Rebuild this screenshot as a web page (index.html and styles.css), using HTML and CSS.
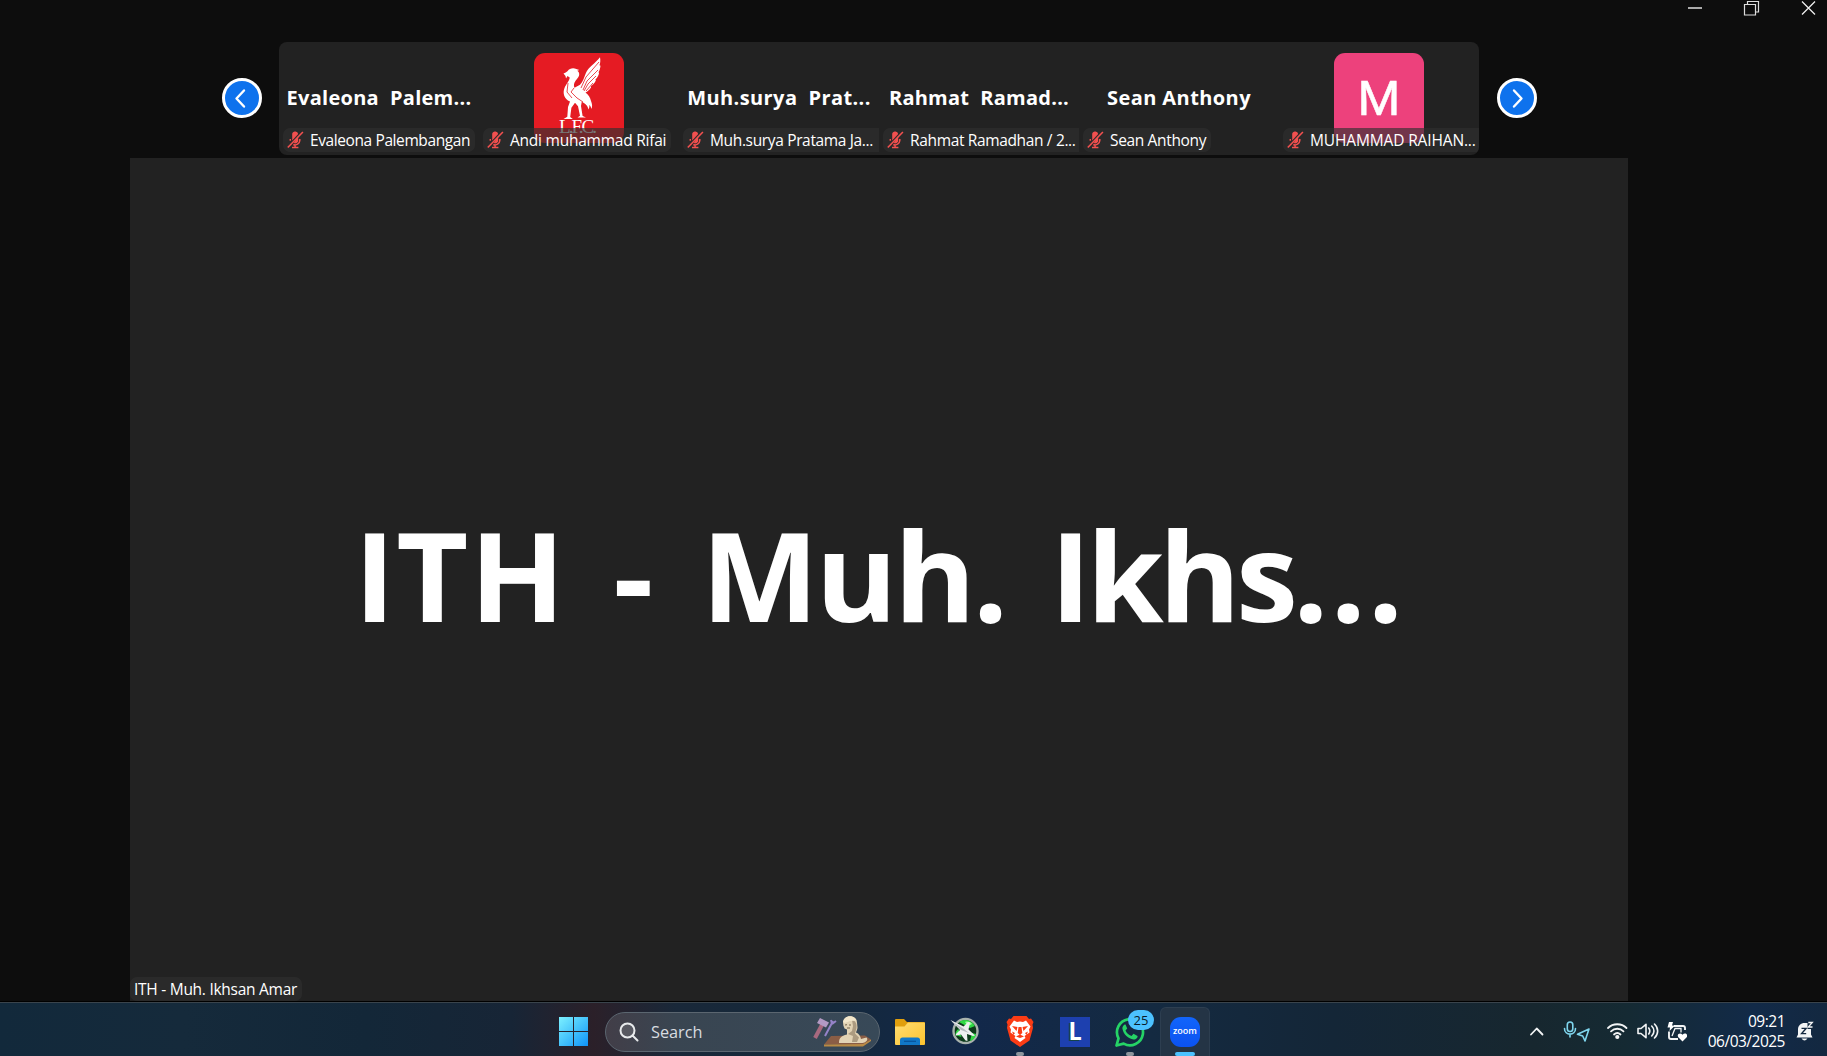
FILE: index.html
```html
<!DOCTYPE html>
<html lang="en">
<head>
<meta charset="utf-8">
<title>Zoom Meeting</title>
<link rel="stylesheet" href="styles.css">
</head>
<body>
<svg class="defs" width="0" height="0" aria-hidden="true">
  <symbol id="mic-off" viewBox="0 0 17 18">
    <path d="M5.200 4a3 3 0 0 1 6-1L5.200 9.500z" fill="#f2504f"/>
    <path d="M11.200 5v4.500a3 3 0 0 1-4.500 2.600z" fill="#f2504f"/>
    <path d="M3.300 8v1.800M12.800 8v1.500a4.600 4.600 0 0 1-6.500 4M8.100 14v2.500M5 16.600h6.400" fill="none" stroke="#f2504f" stroke-width="1.500"/>
    <path d="M.8 16.500 15.900 1" stroke="#f2504f" stroke-width="1.600"/>
  </symbol>
</svg>

<main class="meeting">
  <header class="topbar">
    <svg class="window-controls" width="130" height="18" viewBox="0 0 130 18" fill="none">
      <path d="M4 8h14" stroke="#aaa" stroke-width="2"/>
      <path d="M60.500 4.500h11v10.500h-11zM63.500 4V1.500h11V12H72" stroke="#ddd" stroke-width="1.200"/>
      <path d="m118 1.500 13 13M131 1.500l-13 13" stroke="#eee" stroke-width="1.300"/>
    </svg>
  </header>

  <section class="gallery">
    <button class="arrow" aria-label="Previous"><svg width="33" height="33" viewBox="0 0 33 33"><path d="m19 8.500-7.500 8 7.500 8"/></svg></button>
    <div class="strip">
      <article class="tile">
        <h2 class="name ls-1"><span>Evaleona</span><span>Palem...</span></h2>
        <div class="label lb-1"><svg class="mic"><use href="#mic-off"/></svg>Evaleona Palembangan</div>
      </article>
      <article class="tile">
        <div class="avatar red">
          <svg width="90" height="90" viewBox="0 0 90 90">
            <g fill="#fff">
              <path d="M29.500 20.500c1.500-1 3-1.200 4.200-2.600 1.600-2.600 5.500-3.600 8.600-2l3 1-2 .800c2.600 1.800 2.500 5 .2 7.500-2.600 3-4.500 6-3 9.500l5.500-3c3-3 4-7 6-12 2.600-6 9-9 14-15.500.600 3 .300 6-.500 8l1 .500c-.3 3-1 5-2 6.500l.600.800c-.6 3-2 5-3.600 6.300l.300 1.200c-1 2.500-3 4.500-4.800 5.500v1.500c-1.500 2.500-3.500 4-5.500 5 3.500 2.500 4.500 5 5.500 8.500 1 3 1.800 5 .3 8-.2-2-.8-3-2-4 .2 2 0 3-1 4.500-.3-4-3-5.500-6.500-8l-.8 4.500 1.600 10 3.400 1.500h-8.500l2.500-1.800-2-9.500-3-3.500-3.600 5-1.200 9.300 2.600 2H29.500l3.800-2.200.7-9.800 2-5.500c-6-2.500-7.500-8.500-5.500-13.500 1.600-4 5-7 5.200-10.500l-2.200-1.500-1.500 2.500-.5-2.600z"/>
              <text x="25" y="79.500" font-size="19" textLength="38">L.F.C.</text>
            </g>
            <path d="M65 9 52 24l-5 11M64 17 53 28l-4 9M62 23l-8 8-4 7M59 30l-7 8M34 30l-1 9 5 6M40 35l-3 4 6 6 6 4" fill="none" stroke="#e51b23" stroke-width=".8"/>
          </svg>
        </div>
        <div class="label lb-2"><svg class="mic"><use href="#mic-off"/></svg>Andi muhammad Rifai</div>
      </article>
      <article class="tile">
        <h2 class="name ls-2"><span>Muh.surya</span><span>Prat...</span></h2>
        <div class="label lb-3 full"><svg class="mic"><use href="#mic-off"/></svg>Muh.surya Pratama Ja...</div>
      </article>
      <article class="tile">
        <h2 class="name ls-3"><span>Rahmat</span><span>Ramad...</span></h2>
        <div class="label lb-3 full"><svg class="mic"><use href="#mic-off"/></svg>Rahmat Ramadhan / 2...</div>
      </article>
      <article class="tile">
        <h2 class="name ls-4"><span>Sean Anthony</span></h2>
        <div class="label lb-3"><svg class="mic"><use href="#mic-off"/></svg>Sean Anthony</div>
      </article>
      <article class="tile">
        <div class="avatar pink">M</div>
        <div class="label lb-4 full"><svg class="mic"><use href="#mic-off"/></svg>MUHAMMAD RAIHAN...</div>
      </article>
    </div>
    <button class="arrow" aria-label="Next"><svg width="33" height="33" viewBox="0 0 33 33"><path d="m14 8.500 7.500 8-7.500 8"/></svg></button>
  </section>

  <section class="stage">
    <h1 class="speaker"><span class="w1">ITH</span><span>-</span><span class="w3">Muh.</span><span class="w4">Ikhs<span class="ellipsis">...</span></span></h1>
    <div class="label speaker-label">ITH - Muh. Ikhsan Amar</div>
  </section>
</main>

<footer class="taskbar">
  <svg class="start" width="29" height="29" viewBox="0 0 29 29">
    <defs><linearGradient id="win" gradientUnits="userSpaceOnUse" x1="0" y1="0" x2="29" y2="29"><stop offset="0" stop-color="#7df0ff"/><stop offset=".5" stop-color="#45c3fb"/><stop offset="1" stop-color="#0f93f8"/></linearGradient></defs>
    <path fill="url(#win)" d="M0 0h14v14H0zM15 0h14v14H15zM0 15h14v14H0zM15 15h14v14H15z"/>
  </svg>

  <div class="search">
    <svg width="20" height="20" viewBox="0 0 20 20" fill="#ffffff20" stroke="#e8eaec" stroke-width="2" stroke-linecap="round"><circle cx="8.500" cy="8.500" r="7"/><path d="m13.500 13.500 5 5"/></svg>
    <span>Search</span>
    <svg class="art" width="60" height="32" viewBox="0 0 60 32">
      <path d="m3 22 8-15" stroke="#a8697f" stroke-width="4"/>
      <path d="m8 2 9 4.500-3 5L5 7z" fill="#b39ac4"/>
      <path d="m13 20 8-15M20 8l-1-4M20 8l4-3" stroke="#9583c8" stroke-width="2" fill="none"/>
      <path d="m19 20 34-.5 6 4-7 5H12z" fill="#8a5d45"/>
      <path d="m12 28.500 39-.5 8-4.500v1.500L51 30.500H12z" fill="#b98a45"/>
      <path d="M27 27c0-5 2-7 8-8.500v-5l-2.500-1c-1-2-1.500-4-1.500-6C32-2 45-2 45 6.500l.5 5c0 2-1 3-1.500 5 3 1 4.500 4 5 6.500l5.500-1.500c2 2 0 4.500-4 5.500z" fill="#e2d3b4"/>
      <path d="M40 4c4 1 5 4 4.500 8l-1.500 5.500 4 4L45 26h-5l1-6-5-2 4-3 1-5z" fill="#ac9b80"/>
      <path d="M31 6C32-1.500 42-1.500 44.500 4.500L38 5l-5 2z" fill="#f3e7cb"/>
      <path d="m33 9 2-.3M37 9h2M35 12h3" stroke="#75644c"/>
    </svg>
  </div>

  <nav class="apps">
    <div class="app">
      <svg width="30" height="28" viewBox="0 0 30 28"><defs><linearGradient id="fold" x1="0" y1="0" x2="1" y2="1"><stop offset="0" stop-color="#ffdd73"/><stop offset="1" stop-color="#fcc32d"/></linearGradient></defs><path d="M0 2Q0 1 1 1h8l3 3h17q1 0 1 1v5H0z" fill="#e09f0d"/><path d="M0 8.500h9.500L13 4.500h16q1 0 1 1V26q0 1-1 1H1q-1 0-1-1z" fill="url(#fold)"/><path d="M5 27v-5q0-2.500 2.500-2.500h15Q25 19.500 25 22v5z" fill="#1178c8"/><path d="M9 23.300h12" stroke="#07539a" stroke-width="1.200"/></svg>
    </div>
    <div class="app">
      <svg width="30" height="30" viewBox="0 0 30 30"><circle cx="15.500" cy="14" r="12" fill="#0d3a1b" stroke="#a9b3ad" stroke-width="2.400"/><path d="M9 5c5-3.500 12-2.500 16 4l-5 2zM5.500 18c0-3 1-5 3-6l3 8zM20 24c3.500-1 6-4 6-7l-4-1z" fill="#2fd944"/><path d="M15 5c3-1 6 0 7 2l-4 2z" fill="#a0ffa0"/><path d="M.5 3 13.500 9.500 18 5l2 .5-1.500 7 6.500 6-2 .5-6-2 .5 7-2-.5-4.500-6-5 1v-1.500l4-4z" fill="#eeeff0"/><path d="m2 4.500 12 7.500 5 4-8-3z" fill="#b5babf"/></svg>
    </div>
    <div class="app">
      <svg width="30" height="31" viewBox="0 0 30 31"><path d="M8.500 0h13L24 3l2-.500L28.500 6l-1 2.500L28 12l-3.500 12.500L15 31l-9.500-6.500L2 12l.5-3.500-1-2.500L4 2.500 6 3z" fill="#fb3c15"/><path d="M9 4.500 12 6l3-.5 3 .5 3-1.500 4.500 6-1.500 3 .5 3-5 3.500 1 2L15 26l-5.500-4 1-2-5-3.500.5-3-1.500-3z" fill="#fff"/><path d="m7 10 5.500 1-1 4zM23 10l-5.500 1 1 4zM13.500 11h3l.8 6-2.300 2-2.300-2zM11 20.500l4-2 4 2-4 1.500zM7 15.500l3 1.500-1.500 2zM23 15.500 20 17l1.500 2z" fill="#fb3c15"/></svg>
      <i class="dot"></i>
    </div>
    <div class="app"><span class="l-app">L</span></div>
    <div class="app">
      <svg width="30" height="30" viewBox="0 0 30 30"><path d="m1.500 28.500 2-7.200A13 13 0 1 1 8.700 26.600z" fill="none" stroke="#25d366" stroke-width="2.700" stroke-linejoin="round"/><path d="M10.500 7.500c-1-.3-3.500 1.500-3 4.500.8 5 6 10 11 10.500 2.500.2 4.500-2 4-3.500l-4-2.200-2 2.200c-3-1-5-3-6-5.500l1.700-2z" fill="#25d366"/></svg>
      <b class="badge">25</b>
      <i class="dot"></i>
    </div>
    <div class="app active"><span class="zoom-app">zoom</span><i class="dot wide"></i></div>
  </nav>

  <div class="tray">
    <svg width="136" height="26" viewBox="0 0 136 26" fill="none" stroke="#f2f4f5" stroke-width="1.800" stroke-linecap="round" stroke-linejoin="round">
      <path d="m2 15.500 5.700-6 5.800 6"/>
      <g stroke="#7fd6ee" stroke-width="1.600"><rect x="38.300" y="3" width="5.500" height="9.500" rx="2.700"/><path d="M35.500 9.500c0 7.500 11 7.500 11 0M41 15.500v2.500M60 10l-11.500 5.300 5.200 1.700 2.300 5z"/></g>
      <path d="M79 9c5-5 13.500-5 18.500 0M82 12.300c3.600-3.400 9-3.400 12.500 0M85 15.500c2-1.800 4.600-1.800 6.500 0"/><circle cx="88.300" cy="18" r="1.200" fill="#f2f4f5"/>
      <g stroke-width="1.600"><path d="M109 9.500v5h3l5 4.200V5.300l-5 4.200zM119.700 9c1.500 2 1.500 4 0 6M122.700 7c3 3 3 7 0 10M125.500 5c4.200 4 4.200 10 0 14"/></g>
    </svg>
    <svg class="battery" width="20" height="20" viewBox="0 0 20 20"><path d="M7 4h9q2 0 2 2v2M2 9.500V15q0 2 2 2h7" fill="none" stroke="#f2f4f5" stroke-width="1.900"/><path d="M2 0h4L5 3.500h3L2.500 9 3 5.500H.5zM15.500 19.500l-4.200-4.300c-2-3 2-5 4.200-2.500 2.200-2.500 6.200-.5 4.200 2.500z" fill="#fff"/><path d="m5 14 3-7.500h6v4" fill="none" stroke="#f2f4f5" stroke-width="1.300"/></svg>
    <div class="clock"><span class="time">09:21</span><span class="date">06/03/2025</span></div>
    <svg class="bell" width="18" height="21" viewBox="0 0 18 21"><path d="M2 8.500C2 4.500 5 2 8.500 2H12l3 5v6.500l1.500 3H.5l1.500-3zM5.500 17.500h6q-3 4-6 0z" fill="#f4f5f6"/><path d="M11.500.500H18V8h-6.500z" fill="#13283f"/><path d="M12.300 1.500h4L12.300 6h4.200" fill="none" stroke="#f4f5f6" stroke-width="1.300"/><path d="M5.500 7.300h4.700l-4.700 5.400h4.700" fill="none" stroke="#14283f" stroke-width="1.300"/></svg>
  </div>
</footer>
</body>
</html>
```

FILE: styles.css
```css
* { box-sizing: border-box; margin: 0; padding: 0; }

body {
  width: 1827px;
  height: 1056px;
  display: flex;
  flex-direction: column;
  overflow: hidden;
  background: #0d0d0d;
  color: #fff;
  font-family: "Open Sans", "Noto Sans", sans-serif;
}

.defs { position: absolute; }

/* Meeting window */
.meeting { height: 1001px; display: flex; flex-direction: column; }

.topbar { height: 42px; display: flex; justify-content: flex-end; padding-right: 13px; }
.window-controls { overflow: visible; }

.gallery {
  height: 116px;
  display: flex;
  padding-left: 221.5px;
  gap: 17.5px;
}

.arrow {
  width: 40px;
  height: 40px;
  margin-top: 36px;
  display: grid;
  place-items: center;
  border: 3.5px solid #fff;
  border-radius: 50%;
  background: #0e72ed;
}
.arrow path { fill: none; stroke: #fff; stroke-width: 2.4; stroke-linecap: round; stroke-linejoin: round; }

.strip {
  width: 1200px;
  height: 112.5px;
  display: flex;
  border-radius: 8px;
  overflow: hidden;
  background: #222;
}

.tile { position: relative; width: 200px; display: flex; flex-direction: column; align-items: center; overflow: hidden; }

.name { margin-top: 42px; display: flex; gap: 11px; font-size: 20px; line-height: 28px; font-weight: 700; white-space: nowrap; }
.ls-1 { letter-spacing: .28px; }
.ls-2 { letter-spacing: .42px; }
.ls-3 { letter-spacing: .25px; }
.ls-4 { letter-spacing: .42px; }

.avatar { width: 90px; height: 90px; margin-top: 11px; border-radius: 11px; overflow: hidden; text-align: center; }
.avatar text { font-family: "Liberation Serif", serif; }
.red { background: #e51b23; }
.pink { background: #ed417c; font: 400 49px/92px Roboto, sans-serif; -webkit-text-stroke: .5px #fff; }

/* Caption pill laid over the video */
.label {
  position: absolute;
  left: 4px;
  bottom: 3px;
  height: 24px;
  padding: 0 5px 0 4px;
  display: flex;
  align-items: center;
  gap: 6px;
  border-radius: 7px;
  background: rgba(48, 48, 48, .65);
  font-size: 15.5px;
  line-height: 24px;
  white-space: nowrap;
}
.full { right: 0; border-radius: 7px 0 0 7px; }
.mic { width: 17px; height: 18px; flex: none; }
.lb-1 { letter-spacing: -.4px; }
.lb-2 { letter-spacing: -.24px; }
.lb-3 { letter-spacing: -.35px; }
.lb-4 { letter-spacing: -.14px; }

.stage {
  position: relative;
  width: 1498px;
  height: 843px;
  margin-left: 130px;
  padding: 0 0 11px 1px;
  display: flex;
  align-items: center;
  justify-content: center;
  background: #222;
}
.speaker { display: flex; gap: 47px; font-size: 124.6px; font-weight: 700; white-space: nowrap; }
.w1 { letter-spacing: 1.2px; }
.w3 { margin: 0 -2px 0 1px; letter-spacing: -3.3px; }
.w4 { letter-spacing: -4.8px; }
.ellipsis { letter-spacing: 1.8px; }
.speaker-label { left: 0; bottom: 0; padding-right: 5px; letter-spacing: -.27px; }

/* Taskbar */
.taskbar {
  height: 55px;
  display: flex;
  align-items: center;
  padding: 5px 13px 0 559px;
  border-top: 1px solid #000;
  box-shadow: inset 0 1px #3a444c;
  background: linear-gradient(90deg, #12293b 0, #152a3b 10%, #132738 20%, #172536 28%, #2b2029 32.5%, #192839 37%, #14283a 45%, #12284a 53%, #142a41 63%, #142637 73%, #17272f 84%, #152a33 89%, #122a48 96%, #132840 100%);
}

.search {
  width: 275px;
  height: 40px;
  margin-left: 17px;
  padding: 0 7px 0 13px;
  display: flex;
  align-items: center;
  border: 1px solid #5b6670;
  border-radius: 20px;
  background: linear-gradient(90deg, #423e48, #394551 25%, #384958);
  color: #d8dce0;
  font-size: 16.3px;
}
.search span { margin-left: 12px; }
.art { margin-left: auto; }

.apps { display: flex; gap: 5px; margin-left: 5px; }
.app { position: relative; width: 50px; height: 49px; display: grid; place-items: center; }
.active { border: 1px solid #2d3e50; border-bottom: 0; border-radius: 6px 6px 0 0; background: #243445; }
.l-app {
  width: 30px;
  height: 30px;
  background: #1d40af;
  text-align: center;
  font: 900 24px/28px Lato, sans-serif;
  text-shadow: -1.5px 1px #14424a;
}
.zoom-app {
  width: 30px;
  height: 30px;
  border-radius: 11px;
  background: linear-gradient(#1265fb, #0b52f0);
  text-align: center;
  font: 600 9px/28px "Open Sans", sans-serif;
}
.badge {
  position: absolute;
  left: 23px;
  top: 3px;
  width: 26px;
  height: 20px;
  border-radius: 10px;
  background: #4cc2ff;
  color: #0b1b28;
  text-align: center;
  font-size: 13px;
  line-height: 20px;
  font-weight: 400;
}
.dot { position: absolute; left: 21px; bottom: 0; width: 8px; height: 4px; border-radius: 2px; background: #8d959d; }
.wide { left: 14px; width: 20px; background: #4cc2ff; }

.tray { margin-left: auto; display: flex; align-items: center; }
.tray > svg { flex: none; }
.battery { margin-left: 2px; }
.clock { width: 98px; margin-right: -1px; padding-bottom: 1px; display: flex; flex-direction: column; text-align: right; font-size: 15.5px; line-height: 20px; letter-spacing: -.5px; }
.bell { margin-left: 12px; }
```
